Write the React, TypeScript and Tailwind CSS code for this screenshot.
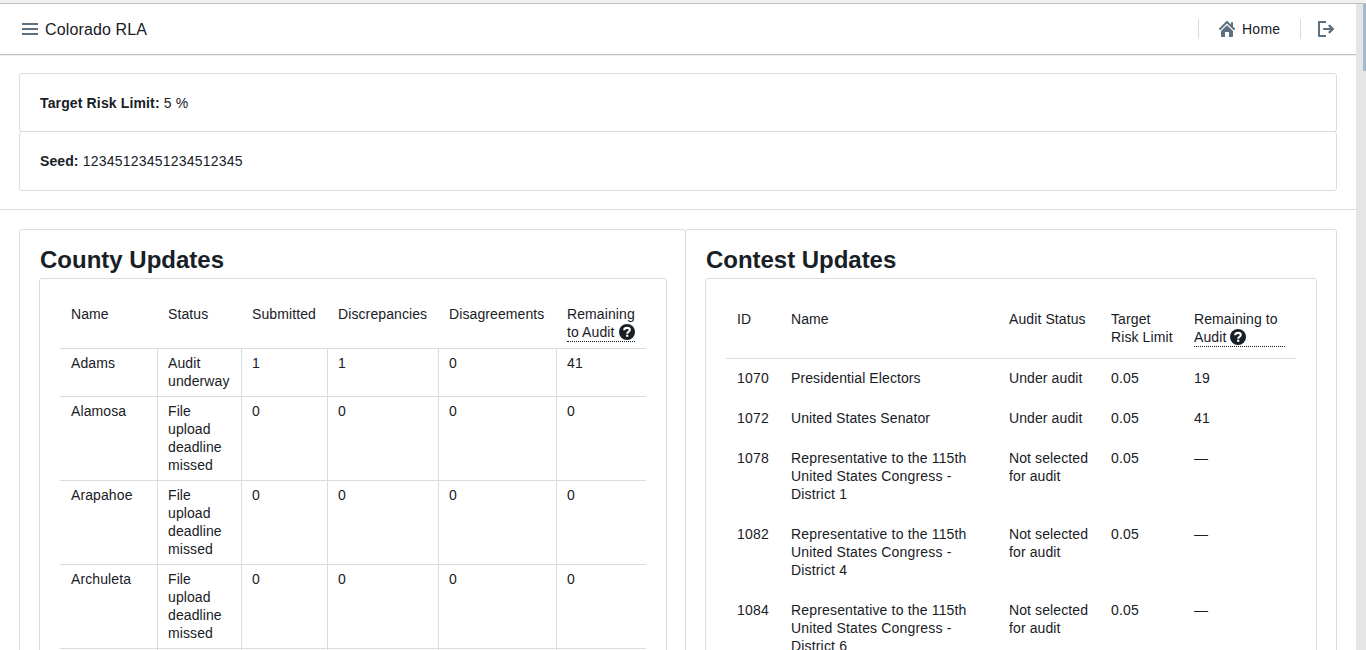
import React from "react";

const PATHS = {
  home: "M2 10v5c0 .55.45 1 1 1h3v-5h4v5h3c.55 0 1-.45 1-1v-5L8 4.200l-6 5.800zm13.71-2.71L14 5.59V2c0-.55-.45-1-1-1s-1 .45-1 1v1.59L8.71.29C8.53.11 8.28 0 8 0s-.53.11-.71.29l-7 7a1.003 1.003 0 001.42 1.42L8 2.41l6.29 6.29c.18.19.43.3.71.3a1.003 1.003 0 00.71-1.71z",
  logOut: "M8 14H2V2h6V0H1C.45 0 0 .45 0 1v14c0 .55.45 1 1 1h7v-2zM15.71 7.29l-3.300-3.300a1.200 1.200 0 00-1.700 1.700L12.100 7H6c-.55 0-1 .45-1 1s.45 1 1 1h6.100l-1.390 1.310a1.200 1.200 0 001.700 1.700l3.300-3.300c.18-.18.29-.43.29-.71 0-.28-.11-.53-.29-.71z",
  menu: "M0 2h16v2H0zM0 7h16v2H0zM0 12h16v2H0z",
};

function Icon({ d }: { d: string }) {
  return (
    <svg viewBox="0 0 16 16" className="size-4 shrink-0 fill-[#5c7080]">
      <path d={d} />
    </svg>
  );
}

function Help() {
  return (
    <svg viewBox="0 0 16 16" className="inline-block size-4 align-[-3px]">
      <circle cx="8" cy="8" r="8" fill="#182026" />
      <path d="M5.200 6.200C5.200 4.500 6.300 3.900 8.100 3.900s2.700.8 2.700 2.100c0 1.800-2.600 1.700-2.600 3.700" fill="none" stroke="#fff" strokeWidth="2.1" />
      <path d="M7.100 10.700h2.200v2.100H7.100z" fill="#fff" />
    </svg>
  );
}

const counties = [
  ["Adams", "Audit underway", "1", "1", "0", "41"],
  ["Alamosa", "File upload deadline missed", "0", "0", "0", "0"],
  ["Arapahoe", "File upload deadline missed", "0", "0", "0", "0"],
  ["Archuleta", "File upload deadline missed", "0", "0", "0", "0"],
];

const contests = [
  ["1070", "Presidential Electors", "Under audit", "0.05", "19"],
  ["1072", "United States Senator", "Under audit", "0.05", "41"],
  ["1078", "Representative to the 115th United States Congress - District 1", "Not selected for audit", "0.05", "—"],
  ["1082", "Representative to the 115th United States Congress - District 4", "Not selected for audit", "0.05", "—"],
  ["1084", "Representative to the 115th United States Congress - District 6", "Not selected for audit", "0.05", "—"],
];

// Numeric cells and the long contest titles are set slightly wider.
function tracking(cell: string) {
  if (/^[\d.]+$/.test(cell)) return "tracking-[0.22px]";
  if (cell.startsWith("Representative")) return "tracking-[0.17px]";
  return "";
}

function CountyTable() {
  return (
    <table className="w-[586px] table-fixed border-separate border-spacing-0 text-left">
      <colgroup>
        <col className="w-[97px]" />
        <col className="w-[84px]" />
        <col className="w-[86px]" />
        <col className="w-[111px]" />
        <col className="w-[118px]" />
        <col className="w-[90px]" />
      </colgroup>
      <thead>
        <tr className="h-[49px] align-top">
          {["Name", "Status", "Submitted", "Discrepancies", "Disagreements"].map((h) => (
            <th key={h} className="pt-[6px] pl-[11px] font-normal">{h}</th>
          ))}
          <th className="pt-[6px] pl-[11px] font-normal">
            <div className="h-[37px] w-[68px] border-b border-dotted border-[#182026]">
              Remaining
              <br />
              <span className="whitespace-nowrap">to Audit <Help /></span>
            </div>
          </th>
        </tr>
      </thead>
      <tbody>
        {counties.map((row) => (
          <tr key={row[0]} className="align-top">
            {row.map((cell, i) => (
              <td
                key={i}
                className={`border-t border-l border-[#dbdcdd] pt-[5px] pr-[9px] pb-[6px] pl-[10px] first:border-l-0 first:pl-[11px] ${tracking(cell)}`}
              >
                {cell}
              </td>
            ))}
          </tr>
        ))}
        <tr className="h-[30px]">
          {counties[0].map((_, i) => (
            <td key={i} className="border-t border-l border-[#dbdcdd] first:border-l-0" />
          ))}
        </tr>
      </tbody>
    </table>
  );
}

function ContestTable() {
  return (
    <table className="w-[570px] table-fixed border-separate border-spacing-0 text-left">
      <colgroup>
        <col className="w-[54px]" />
        <col className="w-[218px]" />
        <col className="w-[102px]" />
        <col className="w-[83px]" />
        <col className="w-[113px]" />
      </colgroup>
      <thead>
        <tr className="h-[59px] align-top">
          {["ID", "Name", "Audit Status", "Target Risk Limit"].map((h) => (
            <th key={h} className="pt-[11px] pr-[10px] pl-[11px] font-normal">{h}</th>
          ))}
          <th className="pt-[11px] pl-[11px] font-normal">
            <div className="h-[37px] w-[91px] border-b border-dotted border-[#182026]">
              Remaining to Audit <Help />
            </div>
          </th>
        </tr>
      </thead>
      <tbody>
        {contests.map((row, r) => (
          <tr key={row[0]} className="align-top">
            {row.map((cell, i) => (
              <td
                key={i}
                className={`px-[11px] pb-[11px] ${r === 0 ? "border-t border-[#dbdcdd] pt-[10px]" : "pt-[11px]"} ${tracking(cell)}`}
              >
                {cell}
              </td>
            ))}
          </tr>
        ))}
      </tbody>
    </table>
  );
}

export default function App() {
  return (
    <div className="flex h-[650px] flex-col overflow-hidden bg-white font-['Liberation_Sans',Arial,sans-serif] text-[14px] leading-[18px] tracking-[0.1px] text-[#182026]">
      <div className="h-1 shrink-0 border-b border-[#c0c0c0] bg-[#f2f1f0]" />
      <div className="flex min-h-0 flex-1">
        <div className="flex min-w-0 flex-1 flex-col overflow-hidden">
          <header className="flex h-[51px] shrink-0 items-center border-b border-[#c3c4c5] pr-[22px] pl-[22px] shadow-[0_1px_0_#ebecec]">
            <Icon d={PATHS.menu} />
            <span className="ml-[7px] pt-px text-[16px] leading-5 tracking-[0.13px]">Colorado RLA</span>
            <div className="ml-auto h-5 w-px bg-[#dadbdc]" />
            <div className="ml-5 flex items-center gap-[7px]">
              <Icon d={PATHS.home} />
              <span className="w-[38px] tracking-[0.25px]">Home</span>
            </div>
            <div className="mr-[17px] ml-5 h-5 w-px bg-[#dadbdc]" />
            <Icon d={PATHS.logOut} />
          </header>

          <section className="h-[155px] shrink-0 border-b border-[#dbdcdd] px-[19px] pt-[18px]">
            <div className="flex h-[59px] items-center rounded-[3px] border border-[#dbdcdd] px-5">
              <p className="tracking-[0.14px]"><strong>Target Risk Limit:</strong> 5 %</p>
            </div>
            <div className="-mt-px flex h-[60px] items-center rounded-[3px] border border-[#dbdcdd] px-5">
              <p className="tracking-[0.22px]"><strong className="tracking-[0.1px]">Seed:</strong> 12345123451234512345</p>
            </div>
          </section>

          <main className="flex min-h-0 flex-1 overflow-hidden px-[19px] pt-[19px]">
            <section className="h-[500px] w-[667px] shrink-0 rounded-t-[3px] border border-[#dbdcdd] pt-[15px] pl-[19px]">
              <h2 className="pl-px text-[24px] leading-[30px] font-bold tracking-normal">County Updates</h2>
              <div className="mt-[3px] h-[450px] w-[628px] rounded-t-[3px] border border-[#dbdcdd] px-5 pt-5">
                <CountyTable />
              </div>
            </section>
            <section className="-ml-px h-[500px] w-[652px] shrink-0 rounded-t-[3px] border border-[#dbdcdd] pt-[15px] pl-[19px]">
              <h2 className="pl-px text-[24px] leading-[30px] font-bold tracking-[-0.03px]">Contest Updates</h2>
              <div className="mt-[3px] h-[450px] w-[612px] rounded-t-[3px] border border-[#dbdcdd] px-5 pt-5">
                <ContestTable />
              </div>
            </section>
          </main>
        </div>
        <div className="flex w-[10px] shrink-0 justify-end bg-[#e5e5e5]">
          <div className="h-[67px] w-[3px] bg-[#a3b9cf]" />
        </div>
      </div>
    </div>
  );
}
